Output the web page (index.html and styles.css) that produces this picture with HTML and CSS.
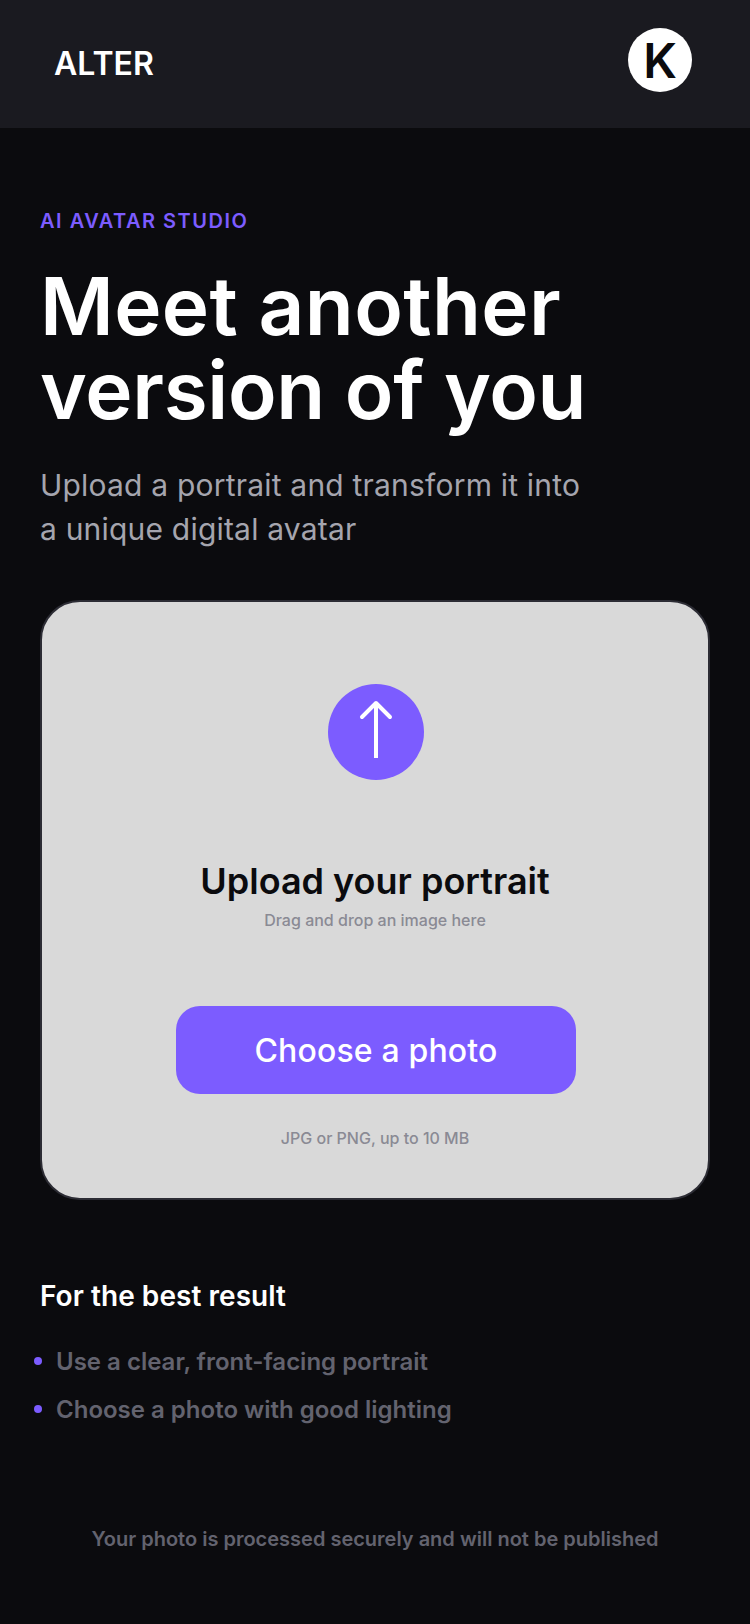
FILE: index.html
```html
<!DOCTYPE html>
<html lang="en">
<head>
    <meta charset="UTF-8">
    <meta name="viewport" content="width=device-width, initial-scale=1.0">
    <title>Alter</title>
    <link rel="stylesheet" href="styles.css">
</head>
<body>
    <header class="topbar">
        <span class="brand">ALTER</span>
        <span class="avatar">K</span>
    </header>

    <main class="content">
        <p class="eyebrow">AI AVATAR STUDIO</p>
        <h1><span class="line-wide">Meet another</span><br><span class="line-tight">version of you</span></h1>
        <p class="lead">Upload a portrait and transform it into<br>a unique digital avatar</p>

        <section class="upload">
            <div class="upload-icon">
                <svg width="96" height="96" viewBox="0 0 96 96" fill="none" stroke="#fff" stroke-width="4">
                    <path d="M48 20V74"/>
                    <path d="M34 33L48 19L62 33" stroke-linecap="round" stroke-linejoin="round"/>
                </svg>
            </div>
            <h2>Upload your portrait</h2>
            <p class="hint">Drag and drop an image here</p>
            <button class="choose">Choose a photo</button>
            <p class="formats">JPG or PNG, up to 10 MB</p>
        </section>

        <h3>For the best result</h3>
        <ul class="tips">
            <li>Use a clear, front-facing portrait</li>
            <li>Choose a photo with good lighting</li>
        </ul>

        <p class="note">Your photo is processed securely and will not be published</p>
    </main>
</body>
</html>
```

FILE: styles.css
```css
* {
    box-sizing: border-box;
}
body {
    background-color: #0b0b0e;
    color: #fff;
    font-family: Inter, sans-serif;
    margin: 0;
}
.topbar {
    align-items: center;
    background-color: #1a1a20;
    display: flex;
    height: 128px;
    justify-content: space-between;
    padding: 0 58px 8px 54px;
}
.brand {
    font-size: 32px;
    font-weight: 600;
    margin-top: 6px;
}
.avatar {
    align-items: center;
    background-color: #fff;
    border-radius: 50%;
    color: #0b0b0e;
    display: flex;
    font-size: 48px;
    font-weight: 600;
    height: 64px;
    justify-content: center;
    width: 64px;
}
.content {
    padding: 82px 40px 0;
}
.eyebrow {
    color: #7c5cff;
    font-size: 20px;
    font-weight: 600;
    letter-spacing: 1.5px;
    line-height: 22px;
    margin: 0;
}
h1 {
    font-size: 80px;
    font-weight: 600;
    line-height: 84px;
    margin: 32px 0 0;
}
.line-wide {
    letter-spacing: 0.35px;
}
.line-tight {
    letter-spacing: -0.3px;
}
.lead {
    color: #a5a5ae;
    font-size: 30px;
    letter-spacing: 0.2px;
    line-height: 44px;
    margin: 31px 0 0;
}
.upload {
    align-items: center;
    background-color: #d9d9d9;
    border: 2px solid #2c2c34;
    border-radius: 40px;
    display: flex;
    flex-direction: column;
    height: 600px;
    margin-top: 49px;
    padding-top: 82px;
}
.upload-icon {
    background-color: #7c5cff;
    border-radius: 50%;
    height: 96px;
    margin-left: 2px;
    width: 96px;
}
h2 {
    color: #0b0b0e;
    font-size: 36px;
    font-weight: 600;
    line-height: 44px;
    margin: 79px 0 0;
}
.hint {
    color: #8a8a94;
    font-size: 16px;
    font-weight: 500;
    line-height: 20px;
    margin: 7px 0 0;
}
.choose {
    background-color: #7c5cff;
    border: 0;
    border-radius: 24px;
    color: #fff;
    font-family: inherit;
    font-size: 32px;
    font-weight: 500;
    height: 88px;
    letter-spacing: 0.15px;
    margin: 76px 0 0 2px;
    width: 400px;
}
.formats {
    color: #8a8a94;
    font-size: 16px;
    font-weight: 500;
    line-height: 20px;
    margin: 34px 0 0;
}
h3 {
    font-size: 28px;
    font-weight: 600;
    letter-spacing: 0.05px;
    line-height: 32px;
    margin: 80px 0 0;
}
.tips {
    color: #63636f;
    font-size: 24px;
    font-weight: 600;
    line-height: 32px;
    list-style: none;
    margin: 34px 0 0;
    padding: 0 0 0 16px;
}
.tips li {
    margin-bottom: 16px;
    position: relative;
}
.tips li::before {
    background-color: #7c5cff;
    border-radius: 50%;
    content: "";
    height: 8px;
    left: -22px;
    position: absolute;
    top: 11px;
    width: 8px;
}
.note {
    color: #63636f;
    font-size: 20px;
    font-weight: 600;
    line-height: 26px;
    margin: 100px 0 0;
    text-align: center;
}
```
